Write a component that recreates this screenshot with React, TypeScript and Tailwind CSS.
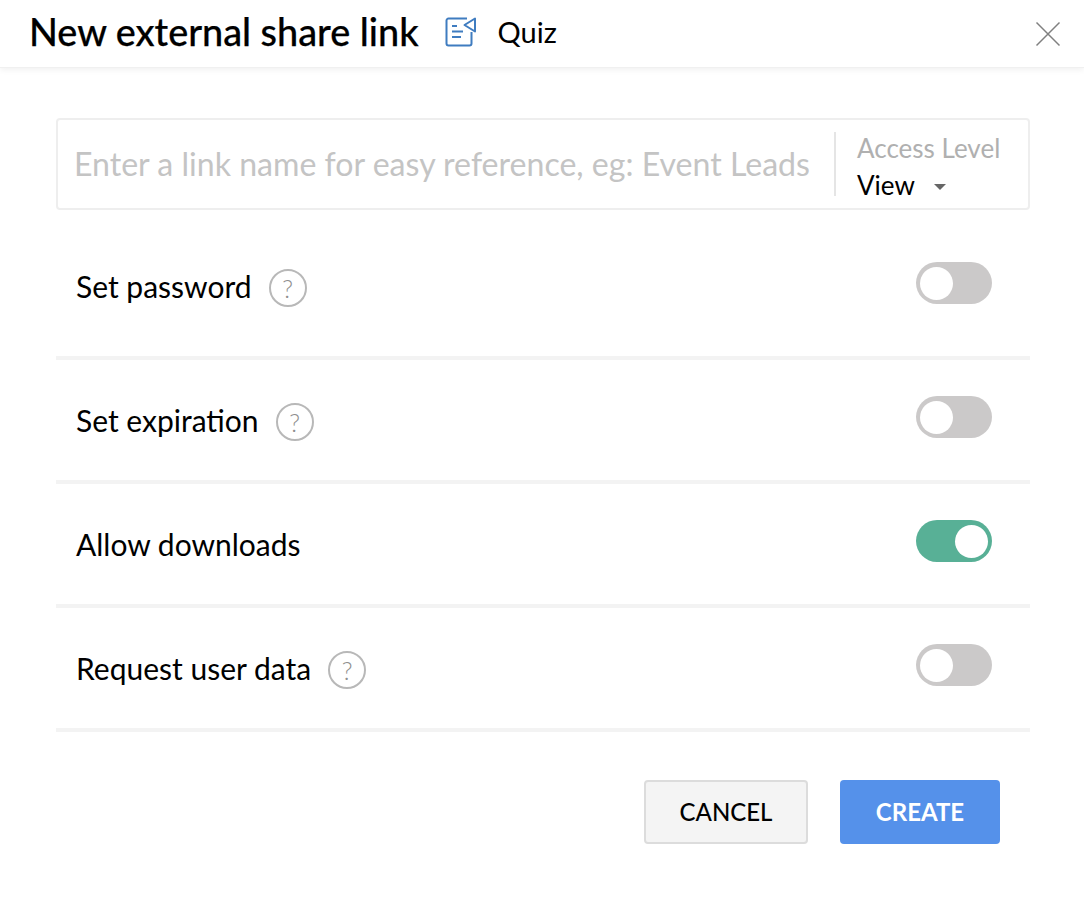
import { Fragment } from 'react';

type Row = {
  label: string;
  help: boolean;
  on: boolean;
};

const ROWS: Row[] = [
  { label: 'Set password', help: true, on: false },
  { label: 'Set expiration', help: true, on: false },
  { label: 'Allow downloads', help: false, on: true },
  { label: 'Request user data', help: true, on: false },
];

function QuizIcon() {
  return (
    <svg width="32" height="32" viewBox="0 0 32 32" fill="none" stroke="#3f7cc0" strokeWidth="2">
      <path d="M23 2.500H4.500a2 2 0 0 0-2 2v23a2 2 0 0 0 2 2h21a2 2 0 0 0 2-2V16" />
      <path d="M31 2.500v13L20.500 9z" strokeLinejoin="round" />
      <path d="M8 10h5M8 15.500h11M8 21h9" />
    </svg>
  );
}

function HelpIcon() {
  return (
    <span className="flex h-[38px] w-[38px] items-center justify-center rounded-full border-2 border-[#b8b8b8] text-[25px] font-light leading-none text-[#8f8f8f]">
      ?
    </span>
  );
}

function Toggle({ on }: { on: boolean }) {
  return (
    <span
      className={`flex h-[42px] w-[76px] items-center rounded-full px-1 ${
        on ? 'justify-end bg-[#58b096]' : 'justify-start bg-[#cbc9c9]'
      }`}
    >
      <span className="h-[33px] w-[33px] rounded-full bg-white" />
    </span>
  );
}

export default function App() {
  return (
    <div className="h-[922px] w-[1084px] bg-white font-['Lato','Open_Sans',sans-serif] text-black">
      {/* Header */}
      <div className="flex h-[68px] items-center border-b border-[#f0f0f0] pb-[4px] pl-[29px] pr-[23px] shadow-[0_2px_6px_rgba(0,0,0,0.06)]">
        <h1 className="text-[37.800px] font-medium leading-none [-webkit-text-stroke:0.25px_black]">
          New external share link
        </h1>
        <span className="ml-[25px] flex">
          <QuizIcon />
        </span>
        <span className="ml-[22px] text-[29px] leading-none">Quiz</span>
        <svg className="ml-auto mt-[4px]" width="26" height="26" viewBox="0 0 26 26" stroke="#808080" strokeWidth="1.500">
          <path d="M1.500 1.500l23 23M24.500 1.500l-23 23" />
        </svg>
      </div>

      <div className="pl-[56px] pr-[54px] pt-[50px]">
        {/* Link name */}
        <div className="flex h-[92px] items-center rounded border-2 border-[#eeeeee] pl-[16px]">
          <span className="w-[760px] whitespace-nowrap text-[32.100px] leading-none text-[#c4c4c4]">
            Enter a link name for easy reference, eg: Event Leads
          </span>
          <div className="flex h-[64px] flex-col justify-center border-l-2 border-[#e5e5e5] pl-[21px] pt-[4px]">
            <span className="text-[26px] leading-[36px] text-[#b0b0b0]">Access Level</span>
            <span className="mt-[1px] flex items-center text-[26px] leading-[36px]">
              View
              <span className="ml-[19px] mt-[4px] h-0 w-0 border-x-[6px] border-t-[6px] border-x-transparent border-t-[#666666]" />
            </span>
          </div>
        </div>

        {/* Options */}
        <div className="pt-[16px]">
          {ROWS.map((row) => (
            <Fragment key={row.label}>
              <div className="flex h-[120px] items-start justify-between pl-[20px] pr-[38px] pt-[36px] first:h-[130px]">
                <div className="flex h-[52px] items-center">
                  <span className="pb-[4px] text-[30px] leading-none">{row.label}</span>
                  {row.help && (
                    <span className="ml-[17px]">
                      <HelpIcon />
                    </span>
                  )}
                </div>
                <Toggle on={row.on} />
              </div>
              <div className="h-[4px] bg-[#f3f3f3]" />
            </Fragment>
          ))}
        </div>

        {/* Actions */}
        <div className="flex justify-end gap-[32px] pr-[30px] pt-[48px]">
          <button className="h-[64px] w-[164px] rounded border-2 border-[#dcdcdc] bg-[#f4f4f4] text-[24px] font-medium">
            CANCEL
          </button>
          <button className="h-[64px] w-[160px] rounded bg-[#5591ea] text-[24px] font-bold text-white">
            CREATE
          </button>
        </div>
      </div>
    </div>
  );
}
